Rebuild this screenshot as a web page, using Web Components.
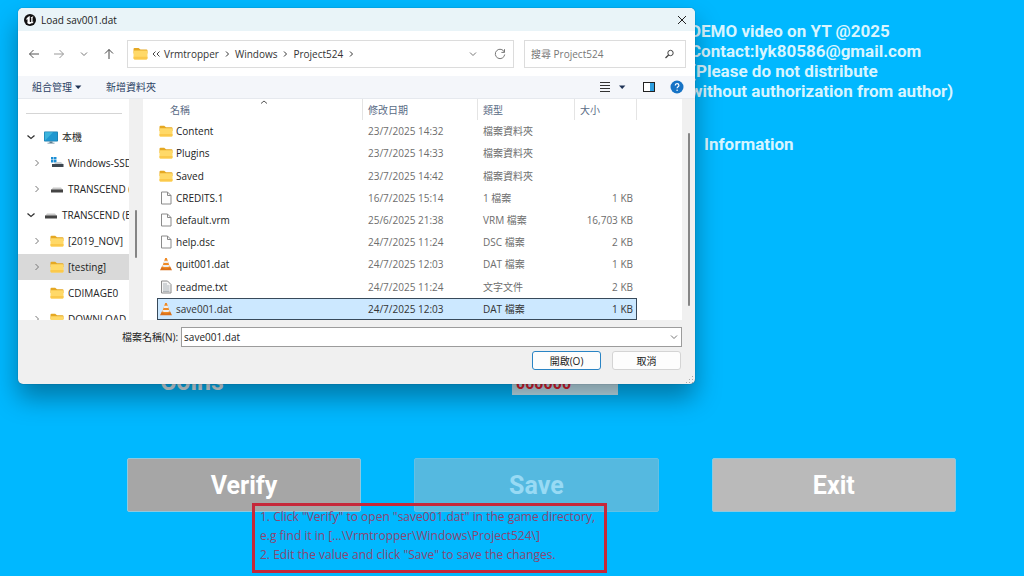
<!DOCTYPE html>
<html lang="zh-Hant">
<head>
<meta charset="UTF-8">
<meta name="viewport" content="width=device-width, initial-scale=1">
<title>Save editor</title>
<style>
  body {
    margin: 0;
    background-color: #00b8ff;
    font-family: "Roboto", "Noto Sans CJK TC", sans-serif;
  }
</style>
</head>
<body>

<game-screen>
  <div slot="notes">DEMO video on YT @2025<br>Contact:lyk80586@gmail.com<br>(Please do not distribute<br>without authorization from author)</div>
  <span slot="info">Information</span>
  <game-button slot="actions">Verify</game-button>
  <game-button slot="actions" disabled>Save</game-button>
  <game-button slot="actions" tone="light">Exit</game-button>
</game-screen>

<hint-box>
  <div>1. Click "Verify" to open "save001.dat" in the game directory,</div>
  <div>e.g find it in [...\Vrmtropper\Windows\Project524\]</div>
  <div>2. Edit the value and click "Save" to save the changes.</div>
</hint-box>

<file-dialog>
  <span slot="title">Load sav001.dat</span>
  <path-bar slot="nav"></path-bar>
  <command-bar slot="commands"></command-bar>
  <folder-tree slot="tree">
    <tree-item icon="pc" state="open">本機</tree-item>
    <tree-item icon="windisk" state="closed" level="1">Windows-SSD (C:)</tree-item>
    <tree-item icon="disk" state="closed" level="1">TRANSCEND (E:)</tree-item>
    <tree-item icon="disk" state="open">TRANSCEND (E:)</tree-item>
    <tree-item icon="folder" state="closed" level="1">[2019_NOV]</tree-item>
    <tree-item icon="folder" state="closed" level="1" selected>[testing]</tree-item>
    <tree-item icon="folder" level="1">CDIMAGE0</tree-item>
    <tree-item icon="folder" state="closed" level="1">DOWNLOAD</tree-item>
  </folder-tree>
  <file-list slot="files"></file-list>
  <dialog-footer slot="footer"></dialog-footer>
</file-dialog>

<script>
const icons = {
  unreal: ['0 0 24 24', `<circle cx="12" cy="12" r="12" fill="#111"/>
    <path d="M11 4.500C7.500 5.600 4.600 8.400 4 12c1.200-1.500 2.200-2 2.700-1.600.3.300.3.800.3 1.300v5c0 .9-.5 1.100-1.200 1 1.800 2.200 4.300 2.800 6.700 2.500l2-1.800 1.800.8c1.700-1.200 2.900-2.700 3.500-4.600-.8.900-1.600 1.400-2.200 1.200-.4-.2-.5-.6-.5-1.200V8.300c0-1.500.9-2.600 2-3.300-2.600-.1-4.800 1.100-6 2.700.9-.2 1.400.2 1.400 1v6.800c-1.300 1-3 .7-3-.6V7.200c0-1.300.4-2 1-2.700z" fill="#fff"/>`],
  close: ['0 0 12 12', '<path d="M2 2l8 8M10 2l-8 8" stroke="#222" fill="none"/>'],
  back: ['0 0 12 12', '<path d="M11 6H1.500M5.500 2L1.500 6l4 4" stroke="#555" fill="none"/>'],
  forward: ['0 0 12 12', '<path d="M1 6h9.500M6.500 2l4 4-4 4" stroke="#999" fill="none"/>'],
  up: ['0 0 12 12', '<path d="M6 11V1.500M2 5.500l4-4 4 4" stroke="#444" fill="none"/>'],
  down: ['0 0 12 12', '<path d="M3 4.500l3 3 3-3" stroke="#777" fill="none"/>'],
  expanded: ['0 0 12 12', '<path d="M2.500 4.500l3.500 3 3.500-3" stroke="#333" stroke-width="1.300" fill="none"/>'],
  right: ['0 0 12 12', '<path d="M4.500 3l3 3-3 3" stroke="#777" fill="none"/>'],
  crumb: ['0 0 12 12', '<path d="M5 3.500L7.500 6 5 8.500" stroke="#333" fill="none"/>'],
  more: ['0 0 12 12', '<path d="M5.500 3.500L3 6l2.500 2.500M9.500 3.500L7 6l2.500 2.500" stroke="#444" fill="none"/>'],
  sort: ['0 0 12 12', '<path d="M3 7.500l3-2.500 3 2.500" stroke="#555" fill="none"/>'],
  refresh: ['0 0 12 12', '<path d="M10.400 4.200A4.700 4.700 0 1 0 10.700 6.500M10.500 1.200v3.200H7.400" stroke="#777" fill="none"/>'],
  search: ['0 0 12 12', '<circle cx="6.500" cy="5" r="2.700" stroke="#444" fill="none"/><path d="M4.600 7L1.500 10" stroke="#444" stroke-width="1.300"/>'],
  caret: ['0 0 12 12', '<path d="M3 4.500h6.400L6.200 8z" fill="#1f3355"/>'],
  lines: ['0 0 12 12', '<path d="M1 1.500h10M1 4.500h10M1 7.500h10M1 10.500h10" stroke="#333" stroke-width="1"/>'],
  pane: ['0 0 12 12', '<rect x=".5" y="1.500" width="11" height="9" fill="#fff" stroke="#222"/><path d="M7 2h4v8H7z" fill="#2d9fe0"/>'],
  help: ['0 0 14 14', '<circle cx="7" cy="7" r="6.500" fill="#1673c5"/><path d="M5.200 5.600c0-2.600 3.700-2.400 3.700-.2 0 1.300-1.800 1.400-1.800 2.900" stroke="#fff" stroke-width="1.200" fill="none"/><circle cx="7.100" cy="10.200" r=".8" fill="#fff"/>'],
  folder: ['0 0 14 14', '<path d="M.5 2.800q0-1 1-1h3.700L7 3.300h5.500q1 0 1 1V7H.5z" fill="#e5a823"/><rect x=".5" y="4.300" width="13" height="8.200" rx="1" fill="#ffd968"/><path d="M.5 10h13v1.500q0 1-1 1h-11q-1 0-1-1z" fill="#fbc94c"/>'],
  file: ['0 0 14 14', '<path d="M2.500 1h6l3.500 3.500V13H2.500z" fill="#fdfdfd" stroke="#8a8a8a"/><path d="M8.500 1v3.500H12" fill="none" stroke="#8a8a8a"/>'],
  text: ['0 0 14 14', '<path d="M2.500 1h6l3.500 3.500V13H2.500z" fill="#f4f4f4" stroke="#8a8a8a"/><path d="M4 4h4M4 6h6.500M4 8h6.500M4 10h6.500M4 11.500h6.500" stroke="#9aa2a8" stroke-width=".8"/>'],
  vlc: ['0 0 14 14', '<path d="M2.800 9.500h8.400l1.800 3.700H1z" fill="#d9701a"/><path d="M6.200 1h1.600L11 10.500q-4 1.800-8 0z" fill="#ef8a24"/><path d="M5.300 3.800h3.400l.7 2.200H4.600zM3.900 8h6.200l.5 1.500q-3.600 1.200-7.200 0z" fill="#eee"/>'],
  pc: ['0 0 14 14', '<rect x="0" y="1.500" width="14" height="10" rx=".8" fill="#1c7fb0"/><path d="M.8 2.200h12.400v8.600H.8z" fill="#1f97d0"/><path d="M.8 10.800L9 2.200H.8z" fill="#3db4dc"/><path d="M5.500 11.500h3v1.300h2v.8h-7v-.8h2z" fill="#5d7f92"/>'],
  disk: ['0 0 14 14', '<path d="M3 5.500h8l2 2.500H1z" fill="#c9c9c9"/><rect x="1" y="7.500" width="12" height="3" fill="#444"/>'],
  windisk: ['0 0 14 14', '<path d="M1 1h2.500v2.500H1zM4 1h2.500v2.500H4zM1 4h2.500v2.500H1zM4 4h2.500v2.500H4z" fill="#1e8fd5"/><path d="M6.500 6H11l2 2H4z" fill="#c4ccd2"/><rect x="2" y="8" width="11.500" height="3" fill="#3d4750"/>'],
  grip: ['0 0 8 8', '<path d="M6 0h1v1H6zM6 3h1v1H6zM6 6h1v1H6zM3 3h1v1H3zM3 6h1v1H3zM0 6h1v1H0z" fill="#aaa"/>']
};

class AppIcon extends HTMLElement {
  connectedCallback() {
    const [box, shape] = icons[this.getAttribute("name")];
    const root = this.attachShadow({ mode: "open" });
    root.innerHTML = `
      <style>
        :host { display: block; flex: none; width: var(--icon-size, 12px); height: var(--icon-size, 12px); }
        svg { display: block; width: 100%; height: 100%; }
      </style>
      <svg viewBox="${box}" aria-hidden="true">${shape}</svg>
    `;
  }
}
customElements.define("app-icon", AppIcon);


class GameButton extends HTMLElement {
  constructor() {
    super();
    this.attachShadow({ mode: "open" });
    this.shadowRoot.innerHTML = `
      <style>
        :host { display: block; }
        button {
          display: block;
          width: 100%;
          height: 54px;
          padding: 0;
          border: 1px solid #8fc8de;
          border-radius: 2px;
          background-color: #a6a6a6;
          color: white;
          font: bold 25px "Roboto", sans-serif;
        }
        :host([tone="light"]) button { background-color: #bababa; }
        :host([disabled]) button {
          background-color: #55b9e0;
          border-color: #63c0e4;
          color: #98daf4;
        }
      </style>
      <button type="button"><slot></slot></button>
    `;
  }

  connectedCallback() {
    this.shadowRoot.querySelector("button").disabled = this.hasAttribute("disabled");
  }
}
customElements.define("game-button", GameButton);


class GameScreen extends HTMLElement {
  constructor() {
    super();
    this.attachShadow({ mode: "open" });
    this.shadowRoot.innerHTML = `
      <style>
        :host {
          display: flex;
          flex-direction: column;
          box-sizing: border-box;
          min-height: 100vh;
          padding: 21px 68px 64px 127px;
          color: white;
        }
        .about {
          align-self: flex-end;
          width: 266px;
          font-weight: bold;
          font-size: 17px;
          line-height: 20px;
          white-space: nowrap;
          color: #d8f5ff;
        }
        .info { padding: 33px 14px 0; }
        .coins {
          display: grid;
          grid-template-columns: 352px 106px;
          align-items: end;
          margin-top: auto;
          padding-left: 33px;
        }
        label { font-weight: bold; font-size: 25px; line-height: 26px; color: #d9e8ee; }
        input {
          box-sizing: border-box;
          width: 100%;
          height: 24px;
          padding: 0 4px;
          border: 0;
          background-color: #bfe3f0;
          color: #e02030;
          font: bold 16px "Roboto", sans-serif;
        }
        .actions {
          display: grid;
          grid-template-columns: 23fr 24fr 24fr;
          gap: 53px;
          margin-top: 63px;
        }
      </style>
      <div class="about">
        <slot name="notes"></slot>
        <div class="info"><slot name="info"></slot></div>
      </div>
      <div class="coins">
        <label for="coins">Coins</label>
        <input id="coins" value="000000">
      </div>
      <div class="actions"><slot name="actions"></slot></div>
    `;
  }
}
customElements.define("game-screen", GameScreen);


class HintBox extends HTMLElement {
  constructor() {
    super();
    this.attachShadow({ mode: "open" });
    this.shadowRoot.innerHTML = `
      <style>
        :host {
          display: block;
          position: absolute;
          left: 252px;
          top: 503px;
          box-sizing: border-box;
          width: 355px;
          padding: 1px 5px 6px;
          border: 3px solid #c6283a;
          color: #8d4672;
          font: 12px/19px "Open Sans", "Noto Sans", sans-serif;
          white-space: nowrap;
        }
      </style>
      <slot></slot>
    `;
  }
}
customElements.define("hint-box", HintBox);


class FileDialog extends HTMLElement {
  constructor() {
    super();
    this.attachShadow({ mode: "open" });
    this.shadowRoot.innerHTML = `
      <style>
        :host {
          display: block;
          position: absolute;
          left: 18px;
          right: 329px;
          top: 8px;
          overflow: hidden;
          border-radius: 5px;
          background-color: #f0f0f0;
          box-shadow: 0 0 1px rgba(0, 30, 60, .7), 0 14px 26px rgba(0, 0, 0, .35);
          color: #222;
          font: 10px/14px "Open Sans", "Noto Sans CJK TC", sans-serif;
        }
        header {
          display: flex;
          align-items: center;
          gap: 5px;
          height: 23px;
          padding: 0 7px 0 6px;
          background-color: #e9f4f8;
        }
        header button { margin-left: auto; padding: 0; border: 0; background: none; }
        .body {
          display: grid;
          grid-template-columns: 111px 14px minmax(0, 1fr) 13px;
          height: 221px;
        }
        .tree, .files { background-color: white; overflow: hidden; }
        .track { display: flex; justify-content: center; }
        .thumb { width: 2px; background-color: #858585; border-radius: 1px; }
        .track.left .thumb { height: 48px; margin-top: 111px; }
        .track.right .thumb { height: 173px; margin-top: 34px; }
      </style>
      <header>
        <app-icon name="unreal"></app-icon>
        <slot name="title"></slot>
        <button type="button" aria-label="Close"><app-icon name="close"></app-icon></button>
      </header>
      <slot name="nav"></slot>
      <slot name="commands"></slot>
      <div class="body">
        <div class="tree"><slot name="tree"></slot></div>
        <div class="track left"><div class="thumb"></div></div>
        <div class="files"><slot name="files"></slot></div>
        <div class="track right"><div class="thumb"></div></div>
      </div>
      <slot name="footer"></slot>
    `;
  }
}
customElements.define("file-dialog", FileDialog);


class PathBar extends HTMLElement {
  constructor() {
    super();
    this.attachShadow({ mode: "open" });
    this.shadowRoot.innerHTML = `
      <style>
        :host {
          display: flex;
          align-items: center;
          gap: 10px;
          height: 45px;
          padding: 0 9px 0 10px;
          background-color: white;
        }
        button { padding: 0; border: 0; background: none; }
        .moves { display: flex; gap: 13px; width: 89px; }
        .path, .search {
          display: flex;
          align-items: center;
          box-sizing: border-box;
          height: 28px;
          border: 1px solid #dcdcdc;
        }
        .path { flex: 1; padding: 0 7px 0 5px; }
        .path > app-icon { --icon-size: 15px; margin-right: 2px; }
        .crumbs { display: flex; align-items: center; gap: 2px; }
        a { color: #333; text-decoration: none; }
        .tools { display: flex; gap: 15px; margin-left: auto; }
        .search { width: 162px; padding: 0 9px 0 6px; }
        input {
          flex: 1;
          min-width: 0;
          padding: 0;
          border: 0;
          outline: 0;
          font: inherit;
          color: #333;
        }
        input::placeholder { color: #777; opacity: 1; }
      </style>
      <div class="moves">
        <button type="button" aria-label="Back"><app-icon name="back"></app-icon></button>
        <button type="button" aria-label="Forward"><app-icon name="forward"></app-icon></button>
        <button type="button" aria-label="Recent"><app-icon name="down"></app-icon></button>
        <button type="button" aria-label="Up"><app-icon name="up"></app-icon></button>
      </div>
      <div class="path">
        <app-icon name="folder"></app-icon>
        <nav class="crumbs">
          <app-icon name="more"></app-icon>
          <a href="#">Vrmtropper</a><app-icon name="crumb"></app-icon>
          <a href="#">Windows</a><app-icon name="crumb"></app-icon>
          <a href="#">Project524</a><app-icon name="crumb"></app-icon>
        </nav>
        <div class="tools">
          <button type="button" aria-label="History"><app-icon name="down"></app-icon></button>
          <button type="button" aria-label="Refresh"><app-icon name="refresh"></app-icon></button>
        </div>
      </div>
      <div class="search">
        <input type="search" placeholder="搜尋 Project524" aria-label="搜尋 Project524">
        <app-icon name="search"></app-icon>
      </div>
    `;
  }
}
customElements.define("path-bar", PathBar);


class CommandBar extends HTMLElement {
  constructor() {
    super();
    this.attachShadow({ mode: "open" });
    this.shadowRoot.innerHTML = `
      <style>
        :host {
          display: flex;
          align-items: center;
          box-sizing: border-box;
          height: 23px;
          padding: 0 11px 0 14px;
          border-bottom: 1px solid #e6e9ee;
          background-color: #f4f6fa;
        }
        button {
          display: flex;
          align-items: center;
          padding: 0;
          border: 0;
          background: none;
          color: #2b3f63;
          font: inherit;
        }
        .manage { margin-right: 22px; }
        .view { gap: 5px; margin-left: auto; }
        .pane { margin: 0 15px; }
        .help { --icon-size: 14px; }
      </style>
      <button type="button" class="manage">組合管理<app-icon name="caret"></app-icon></button>
      <button type="button">新增資料夾</button>
      <button type="button" class="view" aria-label="View"><app-icon name="lines"></app-icon><app-icon name="caret"></app-icon></button>
      <button type="button" class="pane" aria-label="Preview pane"><app-icon name="pane"></app-icon></button>
      <button type="button" class="help" aria-label="Help"><app-icon name="help"></app-icon></button>
    `;
  }
}
customElements.define("command-bar", CommandBar);


class FolderTree extends HTMLElement {
  constructor() {
    super();
    this.attachShadow({ mode: "open" });
    this.shadowRoot.innerHTML = `
      <style>
        :host { display: block; }
        hr { height: 1px; margin: 14px 7px 10px 8px; border: 0; background-color: #d5d5d5; }
      </style>
      <hr>
      <slot></slot>
    `;
  }
}
customElements.define("folder-tree", FolderTree);


class TreeItem extends HTMLElement {
  connectedCallback() {
    const state = this.getAttribute("state");
    const arrow = state === "open" ? "expanded" : "right";
    this.attachShadow({ mode: "open" });
    this.shadowRoot.innerHTML = `
      <style>
        :host { display: block; }
        button {
          display: flex;
          align-items: center;
          width: 100%;
          height: 26px;
          padding: 0 0 0 7px;
          border: 0;
          background: none;
          color: #222;
          font: inherit;
          white-space: nowrap;
          overflow: hidden;
        }
        :host([level="1"]) button { padding-left: 13px; }
        :host([selected]) button { background-color: #d9d9d9; }
        .arrow { margin-right: 7px; }
        .arrow.none { visibility: hidden; }
        .kind { --icon-size: 14px; margin-right: 4px; }
      </style>
      <button type="button">
        <app-icon class="arrow ${state ? "" : "none"}" name="${arrow}"></app-icon>
        <app-icon class="kind" name="${this.getAttribute("icon")}"></app-icon>
        <slot></slot>
      </button>
    `;
  }
}
customElements.define("tree-item", TreeItem);


const files = [
  ["folder", "Content", "23/7/2025 14:32", "檔案資料夾", ""],
  ["folder", "Plugins", "23/7/2025 14:33", "檔案資料夾", ""],
  ["folder", "Saved", "23/7/2025 14:42", "檔案資料夾", ""],
  ["file", "CREDITS.1", "16/7/2025 15:14", "1 檔案", "1 KB"],
  ["file", "default.vrm", "25/6/2025 21:38", "VRM 檔案", "16,703 KB"],
  ["file", "help.dsc", "24/7/2025 11:24", "DSC 檔案", "2 KB"],
  ["vlc", "quit001.dat", "24/7/2025 12:03", "DAT 檔案", "1 KB"],
  ["text", "readme.txt", "24/7/2025 11:24", "文字文件", "2 KB"],
  ["vlc", "save001.dat", "24/7/2025 12:03", "DAT 檔案", "1 KB"]
];

class FileList extends HTMLElement {
  constructor() {
    super();
    this.attachShadow({ mode: "open" });
    this.shadowRoot.innerHTML = `
      <style>
        :host { display: block; box-sizing: border-box; height: 100%; padding: 0 45px 0 14px; }
        table {
          width: 100%;
          height: 100%;
          table-layout: fixed;
          border-collapse: separate;
          border-spacing: 0;
        }
        th, td { padding: 0 5px; text-align: left; white-space: nowrap; }
        th {
          position: relative;
          height: 21px;
          border-right: 1px solid #e4e4e4;
          color: #5a6b85;
          font-weight: normal;
        }
        th:first-child { padding-left: 13px; }
        th app-icon { position: absolute; top: -3px; left: 8px; right: 0; margin: 0 auto; }
        .date { width: 104px; }
        .type { width: 86px; }
        .size { width: 51px; }
        td { color: #6d6d6d; }
        td:first-child { padding-left: 2px; color: #222; }
        td:last-child { padding-right: 4px; text-align: right; }
        .name { display: flex; align-items: center; gap: 3px; --icon-size: 14px; }
        .selected { outline: 1px solid #37495a; outline-offset: -1px; background-color: #cce8ff; }
        .selected td { color: #333; }
      </style>
      <table>
        <thead>
          <tr>
            <th>名稱<app-icon name="sort"></app-icon></th>
            <th class="date">修改日期</th>
            <th class="type">類型</th>
            <th class="size">大小</th>
          </tr>
        </thead>
        <tbody></tbody>
      </table>
    `;

    const tbody = this.shadowRoot.querySelector("tbody");
    for (const [icon, name, date, type, size] of files) {
      const row = document.createElement("tr");
      if (name === "save001.dat") row.classList.add("selected");
      row.innerHTML = `
        <td><div class="name"><app-icon name="${icon}"></app-icon>${name}</div></td>
        <td>${date}</td>
        <td>${type}</td>
        <td>${size}</td>
      `;
      tbody.appendChild(row);
    }
  }
}
customElements.define("file-list", FileList);


class DialogFooter extends HTMLElement {
  constructor() {
    super();
    this.attachShadow({ mode: "open" });
    this.shadowRoot.innerHTML = `
      <style>
        :host { display: block; position: relative; padding: 7px 13px 14px 104px; }
        .field { display: flex; align-items: center; gap: 3px; }
        .combo {
          display: flex;
          align-items: center;
          flex: 1;
          box-sizing: border-box;
          height: 20px;
          padding-right: 1px;
          border: 1px solid #9c9c9c;
          background-color: white;
        }
        .combo input { flex: 1; min-width: 0; padding: 0 2px; border: 0; outline: 0; font: inherit; color: #222; }
        .combo button { padding: 0; border: 0; background: none; }
        .buttons { display: flex; justify-content: flex-end; gap: 11px; margin-top: 4px; padding-right: 1px; }
        .buttons button {
          box-sizing: border-box;
          width: 69px;
          height: 19px;
          padding: 0;
          border: 1px solid #d4d4d4;
          border-radius: 3px;
          background-color: #fdfdfd;
          color: #222;
          font: inherit;
        }
        .buttons .open { border-color: #2a84c4; }
        .grip { --icon-size: 8px; position: absolute; right: 1px; bottom: 0; }
      </style>
      <div class="field">
        <label for="filename">檔案名稱(N):</label>
        <div class="combo">
          <input id="filename" value="save001.dat">
          <button type="button" aria-label="Show files"><app-icon name="down"></app-icon></button>
        </div>
      </div>
      <div class="buttons">
        <button type="button" class="open">開啟(O)</button>
        <button type="button">取消</button>
      </div>
      <app-icon class="grip" name="grip"></app-icon>
    `;
  }
}
customElements.define("dialog-footer", DialogFooter);
</script>
</body>
</html>
